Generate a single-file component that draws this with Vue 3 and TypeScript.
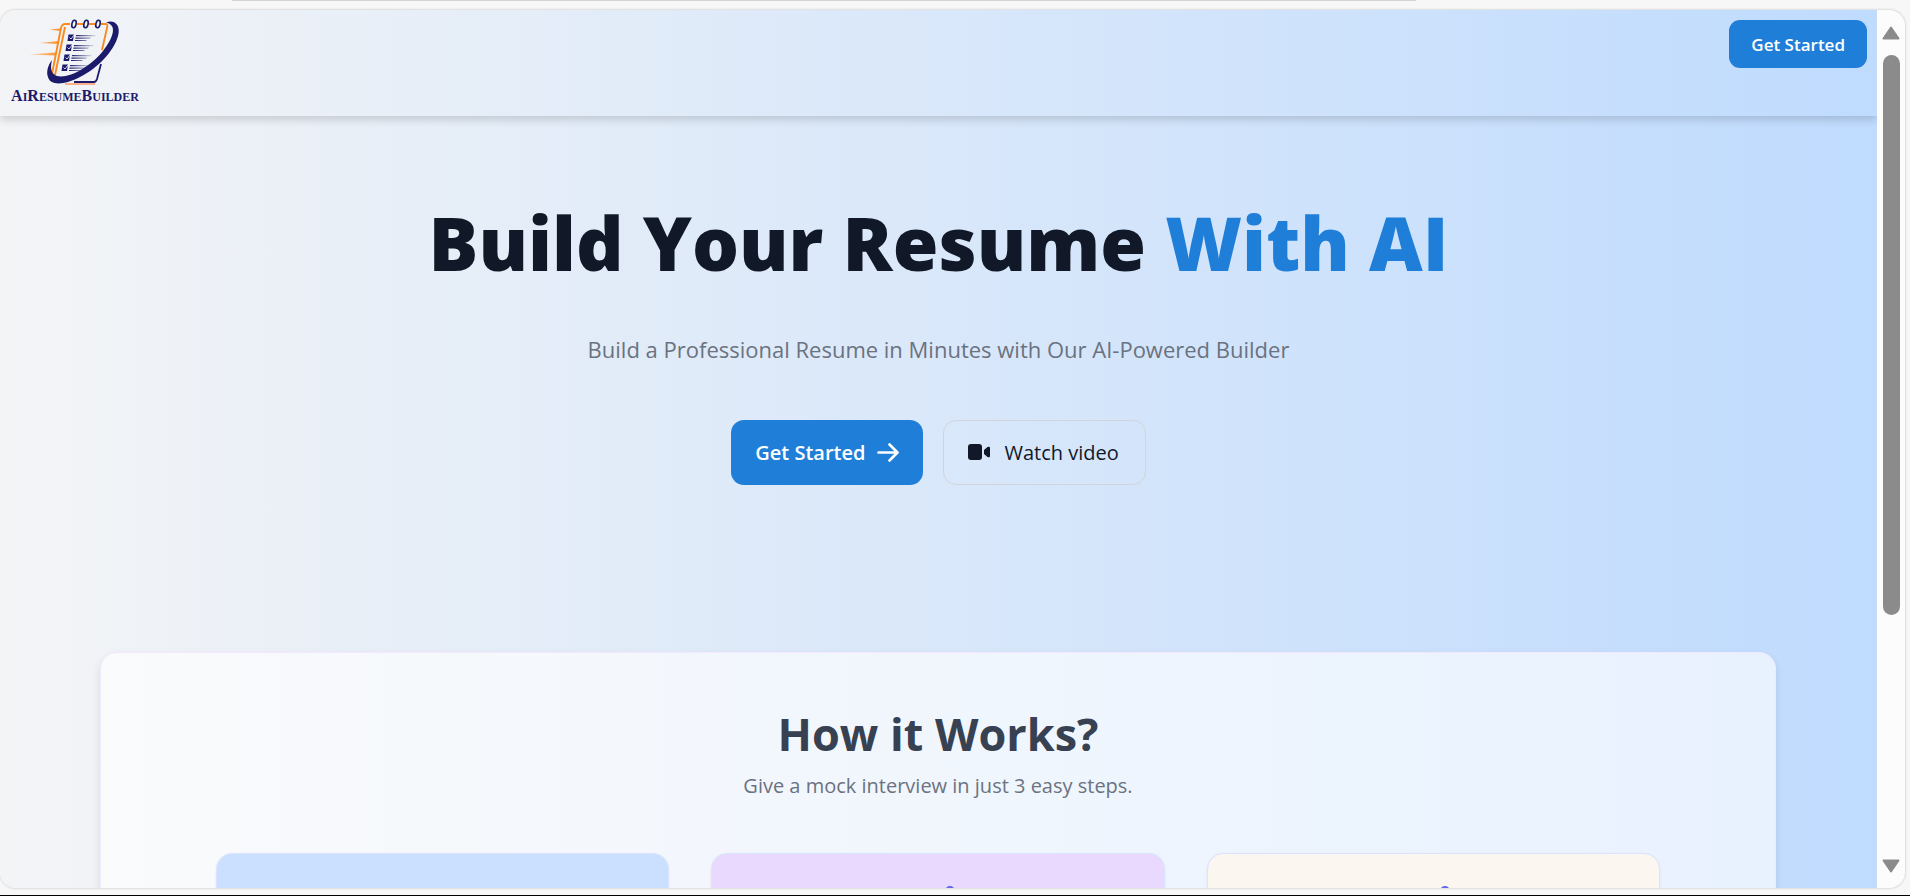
<script setup lang="ts">
interface Step {
  id: string
  tone: string
  peek: boolean
}

const steps: Step[] = [
  { id: 'write', tone: 'blue', peek: false },
  { id: 'edit', tone: 'purple', peek: true },
  { id: 'share', tone: 'cream', peek: true },
]
const ticks = [0, 1, 2, 3]
const rings = [0, 1, 2]
</script>

<template>
  <div class="screen">
    <div class="frame">
      <div class="page">
        <header class="header">
          <a class="brand" href="#" aria-label="AiResumeBuilder">
            <svg class="mark" viewBox="28 14 96 74" aria-hidden="true">
              <defs>
                <linearGradient id="speed" x1="0" x2="1">
                  <stop offset="0" stop-color="#ff8a1c" stop-opacity="0.3" />
                  <stop offset="1" stop-color="#ff8a1c" />
                </linearGradient>
                <linearGradient id="rule" x1="0" x2="1">
                  <stop offset="0" stop-color="#1c1a6b" />
                  <stop offset="1" stop-color="#1c1a6b" stop-opacity="0.1" />
                </linearGradient>
              </defs>
              <path d="M50 29.5 62 28.5V31ZM40 43 60 41V44ZM30 54.5 57 52.5V55.5Z" fill="url(#speed)" />
              <path d="M71 24H66Q63 24 62 28L53 74M66 27 56 75M78 24H84M90 24H96M102 24H107Q109 24 108 28L103 50" fill="none" stroke="#f98a20" stroke-width="1.9" />
              <path d="M66 84H96" stroke="#fb9a68" stroke-width="1.6" />
              <path d="M75 82H95Q97 82 98 79L102 64" fill="none" stroke="#1c1a6b" stroke-width="1.8" />
              <g v-for="i in rings" :key="i">
                <ellipse :cx="75 + i * 12" cy="24" rx="2.1" ry="3.8" :transform="`rotate(12 ${75 + i * 12} 24)`" fill="none" stroke="#1c1a6b" stroke-width="1.6" />
              </g>
              <g v-for="i in ticks" :key="i" :transform="`translate(${-2 * i} ${10 * i})`">
                <path d="M69.500 34.500H75L74 41H68.500Z" fill="#1c1a6b" />
                <path d="M70.500 37.500 72 39 75 35" fill="none" stroke="#fff" stroke-width="0.8" />
                <path d="M77 35H97L96 36.200H76.800ZM76.500 37.500H92L91 38.700H76.300ZM76 40H88L87 41H76Z" fill="url(#rule)" />
              </g>
              <path d="M107 22.500C116 19 122 26 119 36C115 51 99 68 81 77C66 85 51 86 49 77C47 72 49 65 53 60C51 68 52 74 58 76C70 79 91 67 104 51C114 38 119 25 107 22.500Z" fill="#1c1a6b" />
            </svg>
            <span class="wordmark">A<small>I</small>R<small>ESUME</small>B<small>UILDER</small></span>
          </a>
          <button class="btn btn-small" type="button">Get Started</button>
        </header>

        <main>
          <section class="hero">
            <h1>Build Your Resume <span>With AI</span></h1>
            <p>Build a Professional Resume in Minutes with Our AI-Powered Builder</p>
            <div class="actions">
              <button class="btn btn-large" type="button">
                Get Started
                <svg viewBox="0 0 22 22" aria-hidden="true">
                  <path d="M1.500 10.500H20M12.500 2.500l8 8-8 8" fill="none" stroke="currentColor" stroke-width="2.600" stroke-linecap="round" stroke-linejoin="round" />
                </svg>
              </button>
              <button class="btn btn-large btn-outline" type="button">
                <svg viewBox="0 0 22 22" aria-hidden="true">
                  <rect x="0" y="2" width="14" height="16" rx="3" fill="#111827" />
                  <path d="M16 8 19.500 5Q22 4 22 6V14Q22 16 19.500 15L16 12Z" fill="#111827" />
                </svg>
                Watch video
              </button>
            </div>
          </section>

          <section class="works">
            <h2>How it Works?</h2>
            <p>Give a mock interview in just 3 easy steps.</p>
            <div class="steps">
              <article v-for="step in steps" :key="step.id" class="step" :class="step.tone">
                <svg v-if="step.peek" class="step-icon" viewBox="0 0 36 36" aria-hidden="true">
                  <circle cx="18" cy="5" r="4" fill="none" stroke="#6366f1" stroke-width="2" />
                  <path d="M18 9V32M6 20h24" stroke="#6366f1" stroke-width="2" />
                </svg>
              </article>
            </div>
          </section>
        </main>
      </div>

      <div class="scrollbar" aria-hidden="true">
        <svg viewBox="0 0 18 14"><path d="M9 1.500 16.500 12.500H1.500Z" /></svg>
        <div class="track"><div class="thumb"></div></div>
        <svg viewBox="0 0 18 14"><path d="M9 12.500 16.500 1.500H1.500Z" /></svg>
      </div>
    </div>
  </div>
</template>

<style>
body {
  margin: 0;
  background: #f7f7f7;
}
</style>

<style scoped>
* {
  box-sizing: border-box;
}
.screen {
  height: 100vh;
  padding: 10px 5px 7px 0;
  display: flex;
  background:
    linear-gradient(#d4d4d4, #d4d4d4) 32% 0 / 62% 1px no-repeat,
    #f7f7f7;
  border-bottom: 1px solid #000;
  font-family: "Segoe UI", "Open Sans", sans-serif;
}
.frame {
  flex: 1;
  display: flex;
  overflow: hidden;
  border-radius: 16px;
  background: #fcfcfc;
  box-shadow: 0 0 2px 1px #dcdcdc;
}
.page {
  flex: 1;
  min-width: 0;
  overflow: hidden;
  background: linear-gradient(90deg, #f3f4f6, #bfdbfe);
}
.header {
  height: 106px;
  padding: 10px;
  display: flex;
  justify-content: space-between;
  align-items: flex-start;
  box-shadow: 0 4px 8px rgba(0, 0, 0, 0.15);
}
.brand {
  display: flex;
  flex-direction: column;
  align-items: center;
  width: 130px;
  margin-top: -6px;
  color: #1c1a6b;
  text-decoration: none;
}
.mark {
  width: 96px;
  height: 74px;
}
.wordmark {
  font: bold 16px/16px "Liberation Serif", serif;
  white-space: nowrap;
}
.wordmark small {
  font-size: 12px;
}
.btn {
  display: flex;
  align-items: center;
  justify-content: center;
  border: 0;
  background: #1f7fd8;
  color: #fff;
  font-family: inherit;
  font-weight: 600;
  white-space: nowrap;
}
.btn-small {
  height: 48px;
  padding: 0 22px;
  border-radius: 11px;
  font-size: 17px;
}
.hero {
  display: flex;
  flex-direction: column;
  align-items: center;
  padding-top: 87px;
  text-align: center;
}
.hero h1 {
  margin: 0;
  font-size: 74px;
  line-height: 80px;
  font-weight: 800;
  color: #111827;
}
.hero h1 span {
  color: #1f7fd8;
}
.hero p {
  margin: 48px 0 53px;
  font-size: 22px;
  line-height: 36px;
  color: #6b7280;
}
.actions {
  display: flex;
  gap: 20px;
}
.btn-large {
  height: 65px;
  padding: 0 24px;
  gap: 12px;
  border-radius: 13px;
  font-size: 20px;
}
.btn-large svg {
  width: 22px;
  height: 22px;
}
.btn-outline {
  padding: 0 26px 0 24px;
  gap: 14px;
  border: 1px solid #d1d5db;
  background: transparent;
  color: #111827;
  font-weight: 500;
}
.works {
  margin: 167px 101px 0 100px;
  padding: 51px 115px 60px;
  border: 1px solid #f3e8ff;
  border-radius: 17px;
  background: rgba(255, 255, 255, 0.62);
  box-shadow: 0 4px 8px rgba(0, 0, 0, 0.1);
  text-align: center;
}
.works h2 {
  margin: 0;
  font-size: 45px;
  line-height: 60px;
  font-weight: 700;
  color: #374151;
}
.works p {
  margin: 7px 0 52px;
  font-size: 20px;
  line-height: 30px;
  color: #6b7280;
}
.steps {
  display: grid;
  grid-template-columns: repeat(3, 1fr);
  gap: 42px;
}
.step {
  min-height: 260px;
  padding-top: 32px;
  border: 1px solid #dbe4fe;
  border-radius: 16px;
  box-shadow: 0 1px 3px rgba(0, 0, 0, 0.06);
}
.step.blue {
  background: #cbe0fe;
}
.step.purple {
  background: #e9d9fe;
}
.step.cream {
  background: #fbf7f0;
}
.step-icon {
  width: 36px;
  height: 36px;
  margin-left: 24px;
}
.scrollbar {
  width: 28px;
  padding: 16px 5px 15px;
  display: flex;
  flex-direction: column;
  align-items: center;
  gap: 15px;
}
.scrollbar svg {
  width: 18px;
  height: 14px;
  fill: #8b8b8b;
  stroke: #8b8b8b;
  stroke-width: 2;
  stroke-linejoin: round;
}
.track {
  flex: 1;
}
.thumb {
  width: 17px;
  height: 71%;
  border-radius: 9px;
  background: #8b8b8b;
}
</style>
